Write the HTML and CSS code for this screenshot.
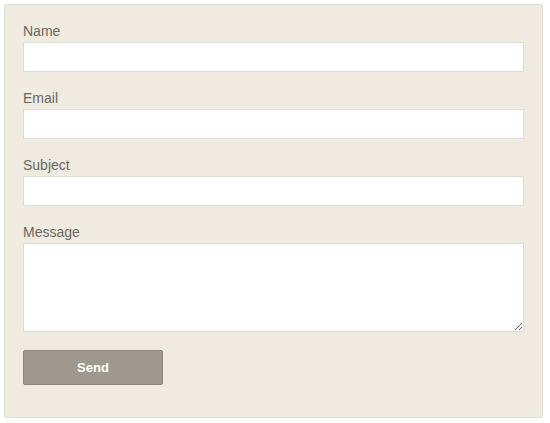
FILE: index.html
```html
<!doctype html>
<html>
<head>
    <title>Contact</title>
    <meta charset="utf-8" />
    <meta name="viewport" content="width=device-width, initial-scale=1" />
    <link rel="stylesheet" href="styles.css">
</head>
<body>
	<form class="contactForm">
		<label class="fieldLabel" for="name">Name</label>
		<input class="fieldInput" id="name" type="text">
		<label class="fieldLabel" for="email">Email</label>
		<input class="fieldInput" id="email" type="text">
		<label class="fieldLabel" for="subject">Subject</label>
		<input class="fieldInput" id="subject" type="text">
		<label class="fieldLabel" for="message">Message</label>
		<textarea class="fieldInput fieldText" id="message"></textarea>
		<button class="sendButton" type="button">Send</button>
	</form>
</body>
</html>
```

FILE: styles.css
```css
    body {
        background-color: #ffffff;
        margin: 4px;
        padding: 0;
        font-family: "Liberation Sans", Arial, Helvetica, sans-serif;
    }
	.contactForm {
	  display: flex;
	  flex-direction: column;
	  align-items: flex-start;
	  width: 501px;
	  padding: 18px 18px 32px 18px;
	  background-color: #f0ebe1;
	  border: 1px solid #e2ddd3;
	  border-radius: 2px;
	}
	.fieldLabel {
	  font-size: 14px;
	  line-height: 17px;
	  color: #6b6660;
	  margin-bottom: 2px;
	}
	.fieldInput {
	  box-sizing: border-box;
	  width: 501px;
	  height: 30px;
	  margin: 0 0 18px 0;
	  padding: 4px 6px;
	  background-color: #ffffff;
	  border: 1px solid #e0dcd4;
	  border-radius: 0;
	  font-family: inherit;
	  font-size: 14px;
	}
	.fieldText {
	  height: 89px;
	  resize: both;
	}
	.sendButton {
	  width: 140px;
	  height: 35px;
	  background-color: #9d9890;
	  border: 1px solid #8b867e;
	  border-radius: 2px;
	  color: #ffffff;
	  font-family: inherit;
	  font-size: 13px;
	  font-weight: bold;
	}
```
